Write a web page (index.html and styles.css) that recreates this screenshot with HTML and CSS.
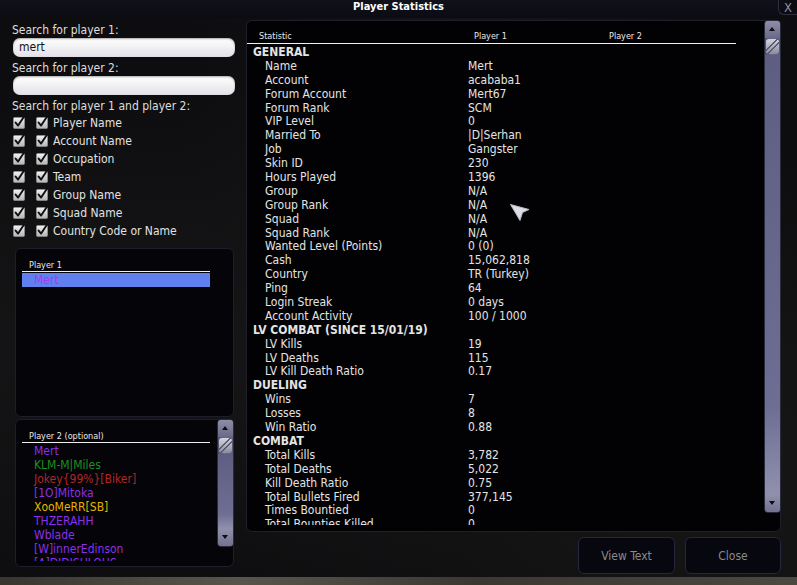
FILE: index.html
```html
<!DOCTYPE html>
<html lang="en">
<head>
    <meta charset="UTF-8">
    <title>Player Statistics</title>
    <link rel="stylesheet" href="styles.css">
</head>
<body>
    <svg width="0" height="0" style="position:absolute">
        <defs>
            <linearGradient id="boxfill" x1="0" y1="0" x2="0" y2="1">
                <stop offset="0" stop-color="#f2f2f2"/>
                <stop offset="1" stop-color="#b4b4b4"/>
            </linearGradient>
            <symbol id="tick" viewBox="0 0 13 13">
                <rect x="0.5" y="1.5" width="11" height="11" rx="1" fill="url(#boxfill)" stroke="#9a9a9a" stroke-width="0.6"/>
                <path d="M2.6 6.6 L5.1 9.6 L10.6 1.2" fill="none" stroke="#101010" stroke-width="1.9" stroke-linecap="round" stroke-linejoin="round"/>
            </symbol>
        </defs>
    </svg>
    <div id='window'>
        <div class='titlebar'>
            <span class='title'>Player Statistics</span>
            <button class='close-x'>X</button>
        </div>
        <div class='main'>
            <div class='side'>
                <label class='lbl'>Search for player 1:</label>
                <div class='field'>mert</div>
                <label class='lbl'>Search for player 2:</label>
                <div class='field'></div>
                <label class='lbl'>Search for player 1 and player 2:</label>
                <div class='opt'><svg class='chk'><use href='#tick'/></svg><svg class='chk'><use href='#tick'/></svg><span>Player Name</span></div>
                <div class='opt'><svg class='chk'><use href='#tick'/></svg><svg class='chk'><use href='#tick'/></svg><span>Account Name</span></div>
                <div class='opt'><svg class='chk'><use href='#tick'/></svg><svg class='chk'><use href='#tick'/></svg><span>Occupation</span></div>
                <div class='opt'><svg class='chk'><use href='#tick'/></svg><svg class='chk'><use href='#tick'/></svg><span>Team</span></div>
                <div class='opt'><svg class='chk'><use href='#tick'/></svg><svg class='chk'><use href='#tick'/></svg><span>Group Name</span></div>
                <div class='opt'><svg class='chk'><use href='#tick'/></svg><svg class='chk'><use href='#tick'/></svg><span>Squad Name</span></div>
                <div class='opt'><svg class='chk'><use href='#tick'/></svg><svg class='chk'><use href='#tick'/></svg><span>Country Code or Name</span></div>

                <div class='panel p1'>
                    <div class='plist-main'>
                        <div class='phead'>Player 1</div>
                        <div class='plist'>
                            <div class='pname sel'>Mert</div>
                        </div>
                    </div>
                </div>

                <div class='panel p2'>
                    <div class='plist-main'>
                        <div class='phead'>Player 2 (optional)</div>
                        <div class='plist'>
                            <div class='pname purple'>Mert</div>
                            <div class='pname green'>KLM-M|Miles</div>
                            <div class='pname red'>Jokey{99%}[Biker]</div>
                            <div class='pname purple'>[1O]Mitoka</div>
                            <div class='pname yellow'>XooMeRR[SB]</div>
                            <div class='pname purple'>THZERAHH</div>
                            <div class='pname purple'>Wblade</div>
                            <div class='pname purple'>[W]innerEdinson</div>
                            <div class='pname purple'>[A]DIDISHLOHS</div>
                        </div>
                    </div>
                    <div class='sbar short'>
                        <div class='sbar-btn up'></div>
                        <div class='sbar-thumb'></div>
                        <div class='sbar-track'></div>
                        <div class='sbar-btn down'></div>
                    </div>
                </div>
            </div>

            <div class='right'>
                <div class='stats'>
                    <div class='stats-main'>
                        <div class='stats-head'>
                            <span>Statistic</span>
                            <span>Player 1</span>
                            <span>Player 2</span>
                        </div>
                        <div class='stats-body'>
                            <div class='row sec'><span>GENERAL</span></div>
                            <div class='row'><span>Name</span><span>Mert</span></div>
                            <div class='row'><span>Account</span><span>acababa1</span></div>
                            <div class='row'><span>Forum Account</span><span>Mert67</span></div>
                            <div class='row'><span>Forum Rank</span><span>SCM</span></div>
                            <div class='row'><span>VIP Level</span><span>0</span></div>
                            <div class='row'><span>Married To</span><span>|D|Serhan</span></div>
                            <div class='row'><span>Job</span><span>Gangster</span></div>
                            <div class='row'><span>Skin ID</span><span>230</span></div>
                            <div class='row'><span>Hours Played</span><span>1396</span></div>
                            <div class='row'><span>Group</span><span>N/A</span></div>
                            <div class='row'><span>Group Rank</span><span>N/A</span></div>
                            <div class='row'><span>Squad</span><span>N/A</span></div>
                            <div class='row'><span>Squad Rank</span><span>N/A</span></div>
                            <div class='row'><span>Wanted Level (Points)</span><span>0 (0)</span></div>
                            <div class='row'><span>Cash</span><span>15,062,818</span></div>
                            <div class='row'><span>Country</span><span>TR (Turkey)</span></div>
                            <div class='row'><span>Ping</span><span>64</span></div>
                            <div class='row'><span>Login Streak</span><span>0 days</span></div>
                            <div class='row'><span>Account Activity</span><span>100 / 1000</span></div>
                            <div class='row sec'><span>LV COMBAT (SINCE 15/01/19)</span></div>
                            <div class='row'><span>LV Kills</span><span>19</span></div>
                            <div class='row'><span>LV Deaths</span><span>115</span></div>
                            <div class='row'><span>LV Kill Death Ratio</span><span>0.17</span></div>
                            <div class='row sec'><span>DUELING</span></div>
                            <div class='row'><span>Wins</span><span>7</span></div>
                            <div class='row'><span>Losses</span><span>8</span></div>
                            <div class='row'><span>Win Ratio</span><span>0.88</span></div>
                            <div class='row sec'><span>COMBAT</span></div>
                            <div class='row'><span>Total Kills</span><span>3,782</span></div>
                            <div class='row'><span>Total Deaths</span><span>5,022</span></div>
                            <div class='row'><span>Kill Death Ratio</span><span>0.75</span></div>
                            <div class='row'><span>Total Bullets Fired</span><span>377,145</span></div>
                            <div class='row'><span>Times Bountied</span><span>0</span></div>
                            <div class='row'><span>Total Bounties Killed</span><span>0</span></div>
                        </div>
                    </div>
                    <div class='sbar tall'>
                        <div class='sbar-btn up'></div>
                        <div class='sbar-thumb'></div>
                        <div class='sbar-track'></div>
                        <div class='sbar-btn down'></div>
                    </div>
                </div>
                <div class='actions'>
                    <button class='btn' id='viewText'>View Text</button>
                    <button class='btn' id='close'>Close</button>
                </div>
            </div>
        </div>

        <!-- mouse pointer -->
        <svg class='pointer' width='22' height='20' viewBox='0 0 22 20'>
            <path d='M1.5 1.5 L20 6.5 L13.5 9.5 L11 17.5 Z' fill='#dcdde6' stroke='#b8b9c6' stroke-width='1' stroke-linejoin='round'/>
        </svg>
    </div>
</body>
</html>
```

FILE: styles.css
```css
*{
    box-sizing: border-box;
}
body{
    margin: 0;
    width: 797px;
    height: 585px;
    overflow: hidden;
    background: linear-gradient(90deg, #3a362f, #5a554c 30%, #3b3731 60%, #4d4840);
    font-family: "DejaVu Sans Condensed", "DejaVu Sans", sans-serif;
    font-size: 12px;
    color: #e2e2e2;
}
#window{
    position: relative;
    height: 577px;
    background:
        radial-gradient(ellipse at 20% 60%, rgba(40,40,40,.35), transparent 55%),
        radial-gradient(ellipse at 90% 80%, rgba(38,38,34,.4), transparent 50%),
        radial-gradient(ellipse at 60% 10%, rgba(30,30,44,.4), transparent 45%),
        #0d0d0f;
}
.titlebar{
    height: 18px;
    display: grid;
    grid-template-columns: 1fr auto 1fr;
    align-items: start;
    background: linear-gradient(#11111c, #0b0b12);
}
.title{
    grid-column: 2;
    font-weight: bold;
    font-size: 11px;
    line-height: 14px;
    color: #fff;
}
.close-x{
    grid-column: 3;
    justify-self: end;
    width: 19px;
    height: 15px;
    padding: 0;
    border: 1px solid #2e2e42;
    border-top: none;
    border-right: none;
    border-radius: 0 0 0 6px;
    background: #0c0c14;
    color: #8e8e9c;
    font-family: "DejaVu Sans Condensed", sans-serif;
    font-size: 13px;
    line-height: 13px;
}

.main{
    display: flex;
    gap: 11px;
    padding: 0 16px 0 12px;
}

/* left column */
.side{
    width: 223px;
    padding-top: 5px;
    display: flex;
    flex-direction: column;
}
.lbl{
    display: block;
    line-height: 14px;
    color: #dedede;
}
.field{
    height: 19px;
    width: 222px;
    margin: 1px 0 4px 1px;
    padding-left: 6px;
    border-radius: 7px;
    background: linear-gradient(#ffffff, #e2e2e8);
    box-shadow: inset 0 1px 2px rgba(0,0,0,.35);
    color: #111;
    line-height: 19px;
}
.opt{
    height: 18px;
    display: flex;
    align-items: center;
}
.chk{
    width: 13px;
    height: 13px;
    margin-left: 1px;
}
.chk + .chk{
    margin-left: 10px;
}
.opt span{
    margin-left: 4px;
    padding-top: 1px;
}

.panel{
    margin-left: 3px;
    width: 219px;
    display: flex;
    background: #040409;
    border: 1px solid #1d1d2b;
    border-radius: 6px;
}
.p1{
    height: 169px;
    margin-top: 9px;
}
.p2{
    height: 148px;
    margin-top: 2px;
}
.plist-main{
    flex: 1;
}
.phead{
    width: 188px;
    margin-left: 6px;
    padding: 10px 0 0 7px;
    font-size: 9px;
    line-height: 12px;
    color: #e8e8e8;
    border-bottom: 1px solid #f0f0f0;
}
.plist{
    margin-top: 1px;
    height: 117px;
    overflow: hidden;
}
.pname{
    width: 188px;
    margin-left: 6px;
    padding-left: 12px;
    height: 14px;
    line-height: 14px;
}
.pname.sel{
    background: #6080f0;
    color: #a43cf2;
}
.purple{ color: #8c30e8; }
.green{ color: #1f8f1f; }
.red{ color: #b02828; }
.yellow{ color: #e6b400; }

/* scrollbars */
.sbar{
    width: 17px;
    margin: -1px -1px 0 0;
    display: flex;
    flex-direction: column;
    border: 1px solid #2b2b3e;
    border-radius: 4px;
    overflow: hidden;
    background: linear-gradient(90deg, #505070, #6c6c92 45%, #5a5a7e);
}
.sbar.short{
    height: 128px;
}
.sbar.tall{
    height: 493px;
}
.sbar-btn{
    height: 17px;
    position: relative;
    background: linear-gradient(#8e8ea8, #6a6a88);
}
.sbar-btn.down{
    background: linear-gradient(#9090aa, #727290);
}
.sbar-btn::after{
    content: '';
    position: absolute;
    left: 4px;
    top: 6px;
    border-left: 3.5px solid transparent;
    border-right: 3.5px solid transparent;
}
.sbar-btn.up::after{
    border-bottom: 4px solid #0c0c12;
}
.sbar-btn.down::after{
    border-top: 4px solid #0c0c12;
}
.sbar-thumb{
    height: 15px;
    margin: 1px 1px 0;
    border-radius: 3px;
    background:
        linear-gradient(135deg, transparent 38%, #5c5c6c 38%, #5c5c6c 45%, transparent 45%, transparent 55%, #5c5c6c 55%, #5c5c6c 62%, transparent 62%),
        linear-gradient(#d4d4de, #8a8aa0);
}
.sbar-track{
    flex: 1;
    background: linear-gradient(#5e5e82, #6e6e94 80%, #9090ae);
    margin: 1px 0 0;
}

/* statistics table */
.right{
    width: 535px;
    margin-top: 2px;
    display: flex;
    flex-direction: column;
}
.stats{
    height: 512px;
    display: flex;
    background: #020204;
    border: 1px solid #1e1e2c;
    border-radius: 6px;
}
.stats-main{
    flex: 1;
}
.stats-head{
    width: 489px;
    padding: 9px 0 1px 6px;
    display: grid;
    grid-template-columns: 215px 135px 1fr;
    font-size: 9px;
    line-height: 12px;
    color: #e8e8e8;
    border-bottom: 1px solid #f0f0f0;
}
.stats-head span{
    padding-left: 6px;
}
.stats-body{
    margin-top: 1px;
    height: 480px;
    overflow: hidden;
}
.row{
    display: grid;
    grid-template-columns: 215px 135px;
    padding-left: 6px;
    height: 13.9px;
    line-height: 15px;
    color: #e4e4e4;
}
.row span:first-child{
    padding-left: 12px;
}
.row.sec span{
    grid-column: 1 / 3;
    padding-left: 0;
    font-weight: bold;
}

.actions{
    margin-top: 5px;
    display: flex;
    justify-content: flex-end;
    gap: 10px;
}
.btn{
    height: 37px;
    width: 97px;
    border: 1px solid #262642;
    border-radius: 6px;
    background: #07070f;
    color: #8a8a8a;
    font-family: "DejaVu Sans Condensed", "DejaVu Sans", sans-serif;
    font-size: 12px;
}
#close{
    width: 96px;
}

.pointer{
    position: absolute;
    left: 509px;
    top: 203px;
}
```
